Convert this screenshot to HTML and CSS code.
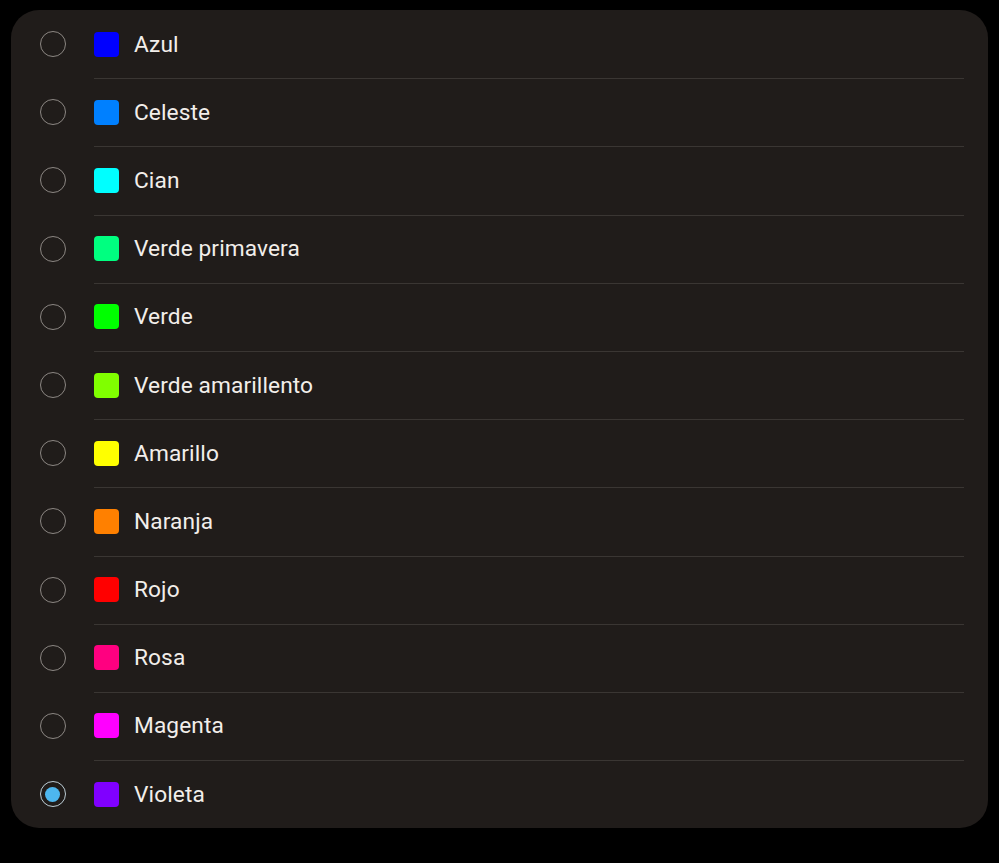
FILE: index.html
```html
<!DOCTYPE HTML>
<html>

<head>
  <meta charset="UTF-8">
  <title>Colores</title>
  <link rel="stylesheet" href="styles.css">
</head>

<body>
  <div class="card">
    <ul class="list">
      <li class="row"><span class="radio"></span><span class="swatch" style="background:#0000ff"></span><span class="label">Azul</span></li>
      <li class="row"><span class="radio"></span><span class="swatch" style="background:#0080ff"></span><span class="label">Celeste</span></li>
      <li class="row"><span class="radio"></span><span class="swatch" style="background:#00ffff"></span><span class="label">Cian</span></li>
      <li class="row"><span class="radio"></span><span class="swatch" style="background:#00ff80"></span><span class="label">Verde primavera</span></li>
      <li class="row"><span class="radio"></span><span class="swatch" style="background:#00ff00"></span><span class="label">Verde</span></li>
      <li class="row"><span class="radio"></span><span class="swatch" style="background:#80ff00"></span><span class="label">Verde amarillento</span></li>
      <li class="row"><span class="radio"></span><span class="swatch" style="background:#ffff00"></span><span class="label">Amarillo</span></li>
      <li class="row"><span class="radio"></span><span class="swatch" style="background:#ff8000"></span><span class="label">Naranja</span></li>
      <li class="row"><span class="radio"></span><span class="swatch" style="background:#ff0000"></span><span class="label">Rojo</span></li>
      <li class="row"><span class="radio"></span><span class="swatch" style="background:#ff0080"></span><span class="label">Rosa</span></li>
      <li class="row"><span class="radio"></span><span class="swatch" style="background:#ff00ff"></span><span class="label">Magenta</span></li>
      <li class="row"><span class="radio checked"></span><span class="swatch" style="background:#8000ff"></span><span class="label">Violeta</span></li>
    </ul>
  </div>
</body>

</html>
```

FILE: styles.css
```css
html,
body {
  margin: 0;
  padding: 0;
  background: #000;
}

body {
  font-family: Roboto, "Noto Sans", sans-serif;
}

ul,
li {
  margin: 0;
  padding: 0;
  list-style: none;
}

.card {
  width: 977px;
  margin: 10px 0 0 11px;
  background: #201c1a;
  border-radius: 28px;
  overflow: hidden;
}

.row {
  display: flex;
  align-items: center;
  height: 68.2px;
  position: relative;
}

.row + .row::before {
  content: "";
  position: absolute;
  top: 0;
  left: 83px;
  right: 24px;
  height: 1px;
  background: #3a3633;
}

.radio {
  box-sizing: border-box;
  width: 26px;
  height: 26px;
  margin-left: 28.5px;
  border: 1.5px solid #8c8783;
  border-radius: 50%;
  display: flex;
  align-items: center;
  justify-content: center;
}

.radio.checked {
  border-color: #bccdd6;
}

.radio.checked::after {
  content: "";
  width: 15px;
  height: 15px;
  border-radius: 50%;
  background: #4db6ee;
}

.swatch {
  width: 25px;
  height: 25px;
  margin-left: 28.5px;
  border-radius: 4px;
}

.label {
  margin-left: 15px;
  font-size: 22.7px;
  color: #f2eeea;
  letter-spacing: 0.1px;
}
```
